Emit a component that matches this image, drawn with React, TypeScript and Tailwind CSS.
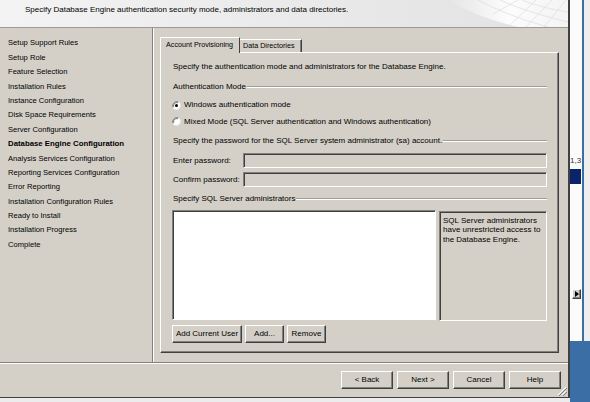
import React from 'react'

const navItems = [
  'Setup Support Rules',
  'Setup Role',
  'Feature Selection',
  'Installation Rules',
  'Instance Configuration',
  'Disk Space Requirements',
  'Server Configuration',
  'Database Engine Configuration',
  'Analysis Services Configuration',
  'Reporting Services Configuration',
  'Error Reporting',
  'Installation Configuration Rules',
  'Ready to Install',
  'Installation Progress',
  'Complete',
]

const raised =
  'border border-t-white border-l-white border-r-[#404040] border-b-[#404040] shadow-[inset_-1px_-1px_0_#808080]'
const sunken =
  'border border-t-[#808080] border-l-[#808080] border-r-white border-b-white shadow-[inset_1px_1px_0_#404040]'

function Button({ label, width }: { label: string; width: string }) {
  return (
    <div className={`${raised} ${width} h-[18px] bg-[#d4d0c8] flex items-center justify-center`}>
      {label}
    </div>
  )
}

function Radio({ checked }: { checked?: boolean }) {
  return (
    <svg width="9" height="9" viewBox="0 0 12 12" className="shrink-0">
      <circle cx="6" cy="6" r="5.5" fill="#fff" />
      <path d="M1.2 8.5 A5.5 5.5 0 0 1 8.5 1.2" fill="none" stroke="#808080" strokeWidth="1.2" />
      <path d="M2.3 7.8 A4.3 4.3 0 0 1 7.8 2.3" fill="none" stroke="#404040" strokeWidth="1" />
      <path d="M10.8 3.5 A5.5 5.5 0 0 1 3.5 10.8" fill="none" stroke="#e4e2dc" strokeWidth="1.2" />
      {checked && <circle cx="6" cy="6" r="2" fill="#000" />}
    </svg>
  )
}

function GroupLabel({ text }: { text: string }) {
  return (
    <div className="flex items-center h-[14px] pl-px">
      <span className="whitespace-nowrap">{text}</span>
      <div className="flex-1 ml-px border-t border-t-[#a19e97] border-b border-b-white" />
    </div>
  )
}

function HeaderArt() {
  return (
    <svg width="130" height="27" viewBox="0 0 130 27" className="absolute right-0 top-0">
      <defs>
        <linearGradient id="hg" x1="0" y1="0" x2="1" y2="0">
          <stop offset="0" stopColor="#fff" stopOpacity="0" />
          <stop offset="0.5" stopColor="#fff" stopOpacity="0.9" />
          <stop offset="1" stopColor="#fff" stopOpacity="0.6" />
        </linearGradient>
      </defs>
      <path d="M10 0 Q40 18 80 27 L130 27 L130 0 Z" fill="url(#hg)" />
      <g stroke="#d9d9d9" strokeWidth="0.6" fill="none">
        <path d="M40 0 Q70 16 110 27" />
        <path d="M62 0 Q88 12 130 22" />
        <path d="M84 0 Q104 8 130 12" />
        <path d="M70 27 L98 0" />
        <path d="M88 27 L114 0" />
        <path d="M106 27 L128 0" />
        <path d="M55 14 L80 0" />
      </g>
    </svg>
  )
}

export default function App() {
  return (
    <div className="w-[590px] h-[402px] flex overflow-hidden bg-[#e6e6e6] font-['Liberation_Sans',Arial,sans-serif] text-[8px] leading-none text-black">
      <div className="w-[570px] flex flex-col">
        <div className="relative h-[398px] flex flex-col bg-[#d4d0c8] border-r-2 border-r-[#404040] border-b border-b-[#404040]">
          {/* header */}
          <div className="relative h-[28px] shrink-0 bg-gradient-to-r from-[#f3f3f3] to-[#e2e2e2] border-b border-b-[#9a9a9a] overflow-hidden">
            <HeaderArt />
            <div className="relative pl-[25px] pt-[6px]">
              Specify Database Engine authentication security mode, administrators and data directories.
            </div>
          </div>

          {/* body */}
          <div className="h-[334px] shrink-0 flex">
            <div className="w-[153px] shrink-0 border-r border-r-[#808080] shadow-[1px_0_0_#fff] pt-[8px] pl-[8px] text-[7.6px]">
              {navItems.map((item) => (
                <div
                  key={item}
                  className={`h-[14.4px] flex items-center whitespace-nowrap ${
                    item === 'Database Engine Configuration' ? 'font-bold text-[7.8px]' : ''
                  }`}
                >
                  {item}
                </div>
              ))}
            </div>

            <div className="flex-1 pl-[7px] pt-[9px]">
              <div className="flex items-end h-[15px] text-[7.2px]">
                <div className="relative z-10 -mb-px h-[16px] w-[80px] bg-[#d4d0c8] border-t border-l border-t-white border-l-white border-r border-r-[#404040] flex items-start pt-[3px] pl-[5px] whitespace-nowrap">
                  Account Provisioning
                </div>
                <div className="h-[13px] w-[62px] border-t border-t-white border-r border-r-[#404040] shadow-[inset_-1px_0_0_#808080] flex items-center pl-[3px] whitespace-nowrap">
                  Data Directories
                </div>
              </div>

              <div className={`${raised} w-[399px] h-[301px] px-[11px] flex flex-col`}>
                <div className="mt-[7px] h-[14px] flex items-center pl-px">
                  Specify the authentication mode and administrators for the Database Engine.
                </div>
                <div className="mt-[6px]">
                  <GroupLabel text="Authentication Mode" />
                </div>
                <div className="mt-[4px] h-[14px] flex items-center gap-[3px]">
                  <Radio checked />
                  <span>Windows authentication mode</span>
                </div>
                <div className="mt-[3px] h-[13px] flex items-center gap-[3px]">
                  <Radio />
                  <span>Mixed Mode (SQL Server authentication and Windows authentication)</span>
                </div>
                <div className="mt-[6px]">
                  <GroupLabel text="Specify the password for the SQL Server system administrator (sa) account." />
                </div>
                <div className="mt-[5px] h-[15px] flex items-center">
                  <span className="w-[71px] shrink-0 pl-px">Enter password:</span>
                  <div className={`${sunken} flex-1 h-[15px] bg-[#d4d0c8]`} />
                </div>
                <div className="mt-[4px] h-[15px] flex items-center">
                  <span className="w-[71px] shrink-0 pl-px whitespace-nowrap">Confirm password:</span>
                  <div className={`${sunken} flex-1 h-[15px] bg-[#d4d0c8]`} />
                </div>
                <div className="mt-[5px]">
                  <GroupLabel text="Specify SQL Server administrators" />
                </div>
                <div className="mt-[4px] flex gap-[3px]">
                  <div className={`${sunken} w-[264px] h-[110px] bg-white`} />
                  <div className={`${sunken} mt-px w-[108px] h-[110px] bg-[#d4d0c8] px-[3px] pt-[4px] leading-[9.3px]`}>
                    SQL Server administrators
                    <br />
                    have unrestricted access to
                    <br />
                    the Database Engine.
                  </div>
                </div>
                <div className="mt-[4px] flex gap-[3px]">
                  <Button label="Add Current User" width="w-[70px]" />
                  <Button label="Add..." width="w-[39px]" />
                  <Button label="Remove" width="w-[39px]" />
                </div>
              </div>
            </div>
          </div>

          {/* footer */}
          <div className="flex-1 border-t border-t-[#808080] shadow-[inset_0_1px_0_#fff] flex items-center justify-end gap-[4px] pr-[7px]">
            <Button label="< Back" width="w-[52px]" />
            <Button label="Next >" width="w-[52px]" />
            <Button label="Cancel" width="w-[52px]" />
            <Button label="Help" width="w-[52px]" />
          </div>

          <svg width="10" height="10" viewBox="0 0 10 10" className="absolute right-[1px] bottom-[1px]">
            <g strokeWidth="1">
              <path d="M9 1 L1 9" stroke="#fff" />
              <path d="M10 2 L2 10" stroke="#808080" />
              <path d="M9 5 L5 9" stroke="#fff" />
              <path d="M10 6 L6 10" stroke="#808080" />
            </g>
          </svg>
        </div>
        <div className="flex-1 bg-[#ececec]" />
      </div>

      {/* window behind */}
      <div className="flex-1 flex flex-col">
        <div className="h-[341px] flex">
          <div className="relative w-[12px] bg-[#fbfbfb] flex flex-col">
            <div className="h-[157px]" />
            <div className="h-[12px] text-[8px] leading-none text-[#333] overflow-hidden whitespace-nowrap">1,3</div>
            <div className="h-[15px] bg-[#0a246a] mr-px" />
            <div className="h-[105px]" />
            <div className={`${raised} ml-[2px] w-[9px] h-[10px] bg-[#d4d0c8] flex items-center justify-center`}>
              <svg width="4" height="6" viewBox="0 0 4 6">
                <path d="M0 0 L4 3 L0 6 Z" fill="#000" />
              </svg>
            </div>
          </div>
          <div className="w-[2px] bg-[#3a6ea5]" />
          <div className="flex-1 bg-[#eeeeee]" />
        </div>
        <div className="flex-1 bg-[#3a6ea5]" />
      </div>
    </div>
  )
}
